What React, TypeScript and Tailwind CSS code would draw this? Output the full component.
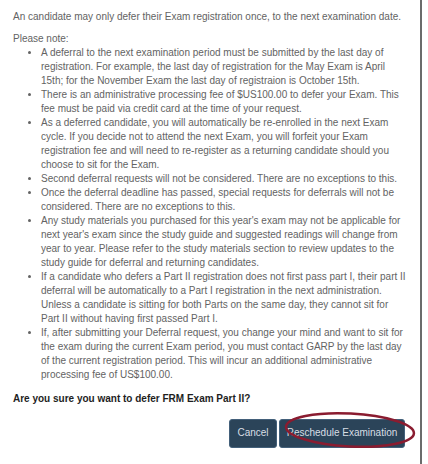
import React from 'react';

const notes = [
  'A deferral to the next examination period must be submitted by the last day of registration. For example, the last day of registration for the May Exam is April 15th; for the November Exam the last day of registraion is October 15th.',
  'There is an administrative processing fee of $US100.00 to defer your Exam. This fee must be paid via credit card at the time of your request.',
  'As a deferred candidate, you will automatically be re-enrolled in the next Exam cycle. If you decide not to attend the next Exam, you will forfeit your Exam registration fee and will need to re-register as a returning candidate should you choose to sit for the Exam.',
  'Second deferral requests will not be considered. There are no exceptions to this.',
  'Once the deferral deadline has passed, special requests for deferrals will not be considered. There are no exceptions to this.',
  "Any study materials you purchased for this year's exam may not be applicable for next year's exam since the study guide and suggested readings will change from year to year. Please refer to the study materials section to review updates to the study guide for deferral and returning candidates.",
  'If a candidate who defers a Part II registration does not first pass part I, their part II deferral will be automatically to a Part I registration in the next administration. Unless a candidate is sitting for both Parts on the same day, they cannot sit for Part II without having first passed Part I.',
  'If, after submitting your Deferral request, you change your mind and want to sit for the exam during the current Exam period, you must contact GARP by the last day of the current registration period. This will incur an additional administrative processing fee of US$100.00.',
];

export default function App() {
  return (
    <div className="w-[428px] h-[464px] bg-white overflow-hidden">
      <div
        className="h-full w-[422px] border-r-2 border-[#6b6b6b] pl-[13px] pr-[12px] pt-[10px] text-[10px] leading-[14px] text-[#636363]"
        style={{ fontFamily: '"Liberation Sans", Arial, sans-serif' }}
      >
        <p className="mb-[7.5px]">
          An candidate may only defer their Exam registration once, to the next examination date.
        </p>
        <p>Please note:</p>
        <ul className="list-disc pl-[28px]">
          {notes.map((n, i) => (
            <li key={i}>{n}</li>
          ))}
        </ul>
        <p className="mt-[10px] font-bold text-[#1e1e1e]">Are you sure you want to defer FRM Exam Part II?</p>

        {/* dialog actions */}
        <div className="mt-[13px] flex justify-end gap-[2px] pr-[3px]">
          <button className="h-[29px] w-[48px] rounded-[3px] border border-[#43607a] bg-[#2b4459] text-[10px] text-[#d8dee4]">
            Cancel
          </button>
          <div className="relative">
            <button className="h-[29px] w-[126px] rounded-[3px] border border-[#43607a] bg-[#2b4459] text-[10px] text-[#d8dee4]">
              Reschedule Examination
            </button>
            <svg
              className="pointer-events-none absolute left-[-10px] top-[-8px]"
              width="160"
              height="46"
              viewBox="0 0 160 46"
            >
              <ellipse
                cx="81"
                cy="19"
                rx="64"
                ry="16.5"
                transform="rotate(3 81 19)"
                fill="none"
                stroke="#8a1c30"
                strokeWidth="2.5"
              />
            </svg>
          </div>
        </div>
      </div>
    </div>
  );
}
